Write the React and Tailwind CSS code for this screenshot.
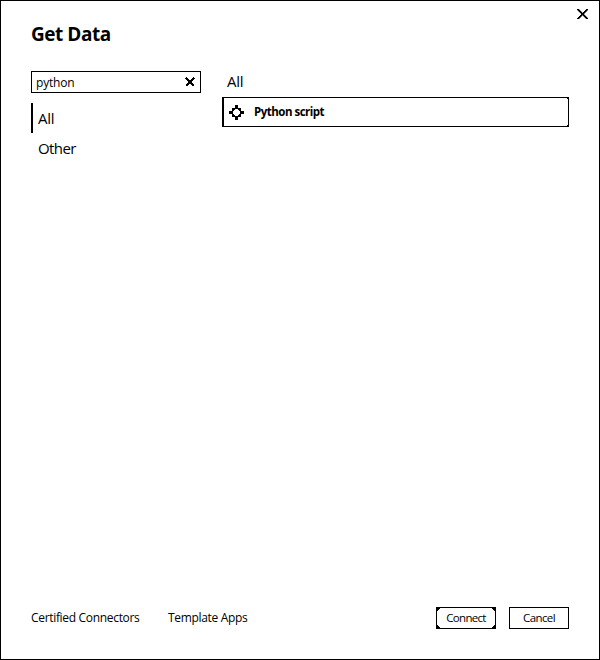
import React from "react";

function CloseIcon() {
  return (
    <svg width="11" height="10" viewBox="0 0 11 10" shapeRendering="crispEdges">
      <path d="M0 0h2v1h1v1h1v1h1v1h1V3h1V2h1V1h1V0h2v1h-1v1H9v1H8v1H7v2h1v1h1v1h1v1h1v1H9V9H8V8H7V7H6V6H5v1H4v1H3v1H2v1H0V9h1V8h1V7h1V6h1V4H3V3H2V2H1V1H0z" fill="#000" stroke="#000" strokeWidth="0.3" />
    </svg>
  );
}

function ClearIcon() {
  return (
    <svg width="10" height="10" viewBox="0 0 10 10">
      <path d="M1 1l8 8M9 1l-8 8" stroke="#000" strokeWidth="2.4" shapeRendering="crispEdges" />
    </svg>
  );
}

function ScriptIcon() {
  return (
    <svg width="15" height="15" viewBox="0 0 15 15" shapeRendering="crispEdges">
      <path d="M6 0h3v3h3v3h3v3h-3v3H9v3H6v-3H3V9H0V6h3V3h3z" fill="#000" />
      <path d="M6 4h3v1h1v1h1v3h-1v1H9v1H6v-1H5V9H4V6h1V5h1z" fill="#fff" />
    </svg>
  );
}

function Corners() {
  return (
    <svg className="absolute inset-0" width="60" height="22" viewBox="0 0 60 22" shapeRendering="crispEdges">
      <path d="M0 0h4v2H3v1H2v1H0zM60 0h-4v2h1v1h1v1h2zM0 22h4v-2H3v-1H2v-1H0zM60 22h-4v-2h1v-1h1v-1h2z" fill="#000" />
    </svg>
  );
}

export default function App() {
  return (
    <div className="flex h-[660px] w-[600px] flex-col border border-black bg-white pr-[30px] pl-[30px] font-['Open_Sans','Noto_Sans',sans-serif] text-black">
      <header className="flex h-[70px] justify-between">
        <h1 className="mt-[20px] text-[19px] leading-[26px] font-bold tracking-[-0.45px]">Get Data</h1>
        <button aria-label="Close" className="mt-2 -mr-[19px] h-[10px] w-[11px]">
          <CloseIcon />
        </button>
      </header>

      <main className="flex flex-1 gap-[21px]">
        <nav className="w-[170px]">
          <div className="flex h-[22px] items-center justify-between border border-black pr-[5px] pl-1">
            <span className="pt-[2px] text-xs leading-4 tracking-[-0.2px]">python</span>
            <ClearIcon />
          </div>
          <div className="mt-[10px] flex h-[30px] items-center border-l-2 border-black pl-[5px] text-[15px] tracking-[-0.3px]">All</div>
          <div className="flex h-[30px] items-center pl-[7px] text-[15px] tracking-[-0.6px]">Other</div>
        </nav>
        <section className="flex-1">
          <div className="h-[26px] pl-[5px] text-[15px] leading-[20px] tracking-[-0.3px]">All</div>
          <div className="relative flex h-[30px] items-center border border-l-2 border-black pl-[5px]">
            <ScriptIcon />
            <span className="ml-[10px] text-[11.5px] font-bold tracking-[-0.5px]">Python script</span>
            <svg className="absolute -top-px -right-px" width="3" height="30" shapeRendering="crispEdges">
              <path d="M0 0h3v3H2V2H1V1H0zM0 30h3v-3H2v1H1v1H0z" />
            </svg>
          </div>
        </section>
      </main>

      <footer className="flex h-[52px] text-xs leading-[22px]">
        <a className="w-[137px] tracking-[-0.32px]">Certified Connectors</a>
        <a className="flex-1 tracking-[-0.32px]">Template Apps</a>
        <button className="relative mr-[13px] flex h-[22px] w-[60px] items-center justify-center border border-black text-[11.5px] tracking-[-0.7px]">
          Connect
          <span className="absolute -top-px -left-px h-[22px] w-[60px]"><Corners /></span>
        </button>
        <button className="flex h-[22px] w-[60px] items-center justify-center border border-black text-[11.5px] tracking-[-0.6px]">Cancel</button>
      </footer>
    </div>
  );
}
